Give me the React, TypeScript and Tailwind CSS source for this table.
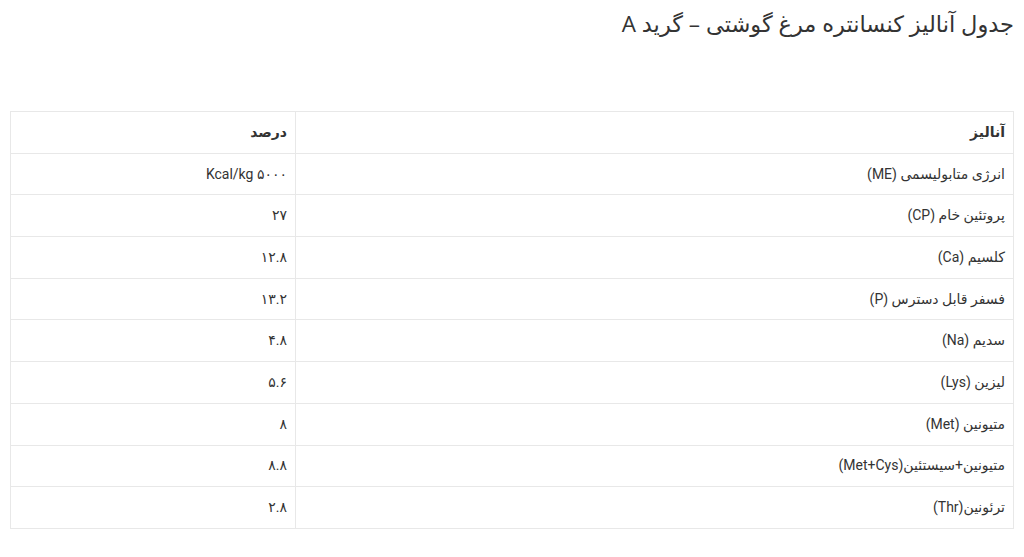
const rows: { name: string; value: string }[] = [
  { name: "انرژی متابولیسمی (ME)", value: "۵۰۰۰ Kcal/kg" },
  { name: "پروتئین خام (CP)", value: "۲۷" },
  { name: "کلسیم (Ca)", value: "۱۲.۸" },
  { name: "فسفر قابل دسترس (P)", value: "۱۳.۲" },
  { name: "سدیم (Na)", value: "۴.۸" },
  { name: "لیزین (Lys)", value: "۵.۶" },
  { name: "متیونین (Met)", value: "۸" },
  { name: "متیونین+سیستئین(Met+Cys)", value: "۸.۸" },
  { name: "ترئونین(Thr)", value: "۲.۸" },
];

export default function App() {
  return (
    <div dir="rtl" className="w-[1024px] h-[557px] bg-white px-[10px] text-[#333] font-['Roboto','DejaVu_Sans',sans-serif]">
      <h1 className="pt-[7px] text-[22.5px] leading-[34px] font-normal font-['Open_Sans','DejaVu_Sans',sans-serif] text-[#333]">
        جدول آنالیز کنسانتره مرغ گوشتی – گرید A
      </h1>

      <table className="mt-[70px] w-full border-collapse text-[14px]">
        <thead>
          <tr>
            <th className="w-[718px] h-[41.7px] border border-[#e8e8e8] px-2 text-right font-semibold">آنالیز</th>
            <th className="h-[41.7px] border border-[#e8e8e8] px-2 text-right font-semibold">درصد</th>
          </tr>
        </thead>
        <tbody>
          {rows.map((row) => (
            <tr key={row.name}>
              <td className="h-[41.7px] border border-[#e8e8e8] px-2 text-right">{row.name}</td>
              <td className="h-[41.7px] border border-[#e8e8e8] px-2 text-right">{row.value}</td>
            </tr>
          ))}
        </tbody>
      </table>
    </div>
  );
}
